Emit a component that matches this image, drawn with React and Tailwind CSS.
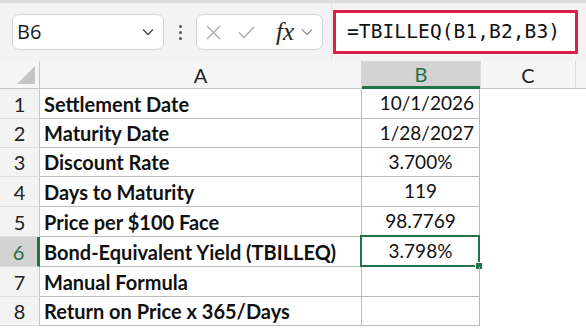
import React from 'react';

const rows = [
    { n: 1, label: "Settlement Date", value: "10/1/2026", align: "right", h: "h-[30px]" },
    { n: 2, label: "Maturity Date", value: "1/28/2027", align: "right", h: "h-[29px]" },
    { n: 3, label: "Discount Rate", value: "3.700%", align: "center", h: "h-[29px]" },
    { n: 4, label: "Days to Maturity", value: "119", align: "center", h: "h-[30px]" },
    { n: 5, label: "Price per $100 Face", value: "98.7769", align: "center", h: "h-[30px]" },
    { n: 6, label: "Bond-Equivalent Yield (TBILLEQ)", value: "3.798%", align: "center", h: "h-[30px]", active: true },
    { n: 7, label: "Manual Formula", value: "", align: "center", h: "h-[30px]" },
    { n: 8, label: "Return on Price x 365/Days", value: "", align: "center", h: "h-[29px]" },
];

function Chevron({ className }) {
    return (
        <svg className={className} width="12" height="8" viewBox="0 0 12 8" fill="none">
            <path d="M1 1.5 L6 6.5 L11 1.5" stroke="currentColor" strokeWidth="1.4" />
        </svg>
    );
}

function FormulaBar() {
    return (
        <div className="h-[61px] bg-[#f3f3f3] flex items-center relative border-t-[3px] border-[#dcdcdc]">
            <div className="ml-[12px] w-[152px] h-[36px] bg-white border border-[#d4d4d4] rounded-[7px] flex items-center justify-between pl-[4px] pr-[9px]">
                <span className="text-[20px] text-[#1a1a1a] font-['Open_Sans',sans-serif]">B6</span>
                <Chevron className="text-[#444]" />
            </div>
            <div className="w-[32px] flex flex-col items-center gap-[3px]">
                <span className="w-[3px] h-[3px] bg-[#555] rounded-full"></span>
                <span className="w-[3px] h-[3px] bg-[#555] rounded-full"></span>
                <span className="w-[3px] h-[3px] bg-[#555] rounded-full"></span>
            </div>
            <div className="w-[127px] h-[36px] bg-white border border-[#d4d4d4] rounded-[7px] flex items-center pl-[9px] pr-[6px]">
                <svg width="15" height="15" viewBox="0 0 15 15" fill="none">
                    <path d="M1 1 L14 14 M14 1 L1 14" stroke="#a8a8a8" strokeWidth="1.3" />
                </svg>
                <svg className="ml-[17px]" width="17" height="13" viewBox="0 0 17 13" fill="none">
                    <path d="M1 6.5 L6 11.5 L16 1" stroke="#a8a8a8" strokeWidth="1.3" />
                </svg>
                <span className="ml-[21px] text-[25px] italic text-[#222] font-['Liberation_Serif',serif] leading-none -mt-[2px]">fx</span>
                <Chevron className="ml-[7px] text-[#999]" />
            </div>
            <div className="ml-[8px] w-px h-[58px] bg-[#e2e2e2]"></div>
            <div className="ml-[1px] w-[245px] h-[44px] bg-white border-[3px] border-[#dc1f48] flex items-center pl-[11px]">
                <span className="text-[19.5px] text-[#111] font-['DejaVu_Sans_Mono',monospace] tracking-[0.1px]">=TBILLEQ(B1,B2,B3)</span>
            </div>
        </div>
    );
}

function ColumnHeader() {
    return (
        <div className="flex h-[28px] bg-[#f5f5f5] border-b border-[#c6c6c6] text-[20px] font-['Lato',sans-serif] text-[#222]">
            <div className="w-[40px] border-r border-[#c6c6c6] relative">
                <svg className="absolute right-[4px] bottom-[4px]" width="18" height="18" viewBox="0 0 18 18">
                    <polygon points="18,0 18,18 0,18" fill="#c4c4c4" />
                </svg>
            </div>
            <div className="w-[322px] flex items-center justify-center border-r border-[#dadada]">A</div>
            <div className="w-[118px] flex items-center justify-center bg-[#d3d3d3] text-[#1e7145] border-b-[3px] border-[#217346] -mb-px">B</div>
            <div className="w-[96px] flex items-center justify-center border-l border-r border-[#dadada]">C</div>
            <div className="flex-1"></div>
        </div>
    );
}

function Row({ row }) {
    const valueAlign = row.align === "right" ? "justify-end pr-[5px]" : "justify-center";
    return (
        <div className={`flex ${row.h} font-['Lato',sans-serif]`}>
            <div
                className={`w-[40px] flex items-center justify-center text-[20px] border-b border-[#dcdcdc] ${
                    row.active
                        ? "bg-[#d3d3d3] text-[#1e7145] border-r-[3px] border-r-[#217346]"
                        : "bg-[#f3f3f3] text-[#222] border-r border-r-[#c6c6c6]"
                }`}
            >
                {row.n}
            </div>
            <div className="w-[322px] flex items-center pl-[4px] text-[20px] font-bold text-[#111] border-b border-r border-[#b9b9b9] whitespace-nowrap">
                {row.label}
            </div>
            <div className={`w-[118px] relative flex items-center ${valueAlign} text-[19px] text-[#111] border-b border-r border-[#b9b9b9]`}>
                {row.value}
                {row.active && (
                    <div className="absolute -left-[2px] -top-[2px] -right-[1px] -bottom-[1px] border-2 border-[#217346]">
                        <div className="absolute -right-[5px] -bottom-[5px] w-[8px] h-[8px] bg-[#217346] border border-white"></div>
                    </div>
                )}
            </div>
            <div className="flex-1 bg-white"></div>
        </div>
    );
}

export default function App() {
    return (
        <div className="w-[586px] h-[328px] bg-white overflow-hidden">
            <FormulaBar />
            <ColumnHeader />
            {rows.map((row) => (
                <Row key={row.n} row={row} />
            ))}
        </div>
    );
}
